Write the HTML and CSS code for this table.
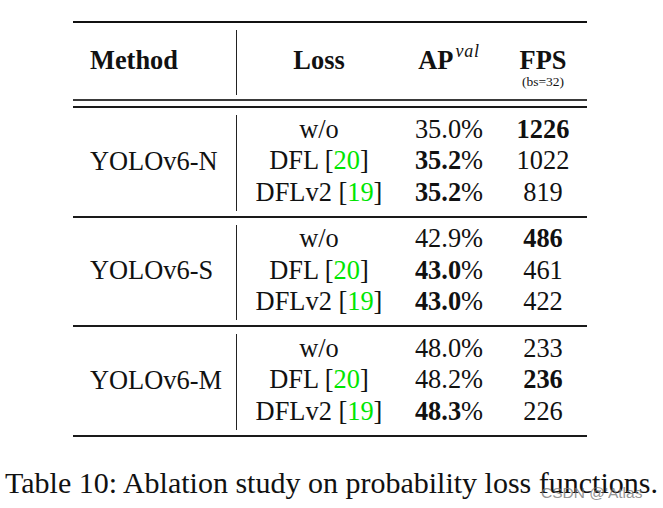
FILE: index.html
```html
<!DOCTYPE html>
<html>
<head>
<meta charset="utf-8">
<link rel="stylesheet" href="styles.css">
</head>
<body>
<div class="page">
  <div class="tbl">
    <div class="rule thick"></div>
    <div class="head">
      <div class="c1"><b>Method</b></div>
      <div class="cols">
        <div class="c2"><b>Loss</b></div>
        <div class="c3"><b>AP</b><span class="sup">val</span></div>
        <div class="c4"><b>FPS</b><span class="bs">(bs=32)</span></div>
      </div>
    </div>
    <div class="rule thin"></div>
    <div class="gap"></div>
    <div class="rule thin dark"></div>

    <div class="group">
      <div class="c1">YOLOv6-N</div>
      <div class="cols rows">
        <div class="c2">w/o</div><div class="c3">35.0%</div><div class="c4"><b>1226</b></div>
        <div class="c2">DFL [<span class="cite">20</span>]</div><div class="c3"><b>35.2</b>%</div><div class="c4">1022</div>
        <div class="c2">DFLv2 [<span class="cite">19</span>]</div><div class="c3"><b>35.2</b>%</div><div class="c4">819</div>
      </div>
    </div>
    <div class="rule mid"></div>

    <div class="group">
      <div class="c1">YOLOv6-S</div>
      <div class="cols rows">
        <div class="c2">w/o</div><div class="c3">42.9%</div><div class="c4"><b>486</b></div>
        <div class="c2">DFL [<span class="cite">20</span>]</div><div class="c3"><b>43.0</b>%</div><div class="c4">461</div>
        <div class="c2">DFLv2 [<span class="cite">19</span>]</div><div class="c3"><b>43.0</b>%</div><div class="c4">422</div>
      </div>
    </div>
    <div class="rule mid"></div>

    <div class="group">
      <div class="c1">YOLOv6-M</div>
      <div class="cols rows">
        <div class="c2">w/o</div><div class="c3">48.0%</div><div class="c4">233</div>
        <div class="c2">DFL [<span class="cite">20</span>]</div><div class="c3">48.2%</div><div class="c4"><b>236</b></div>
        <div class="c2">DFLv2 [<span class="cite">19</span>]</div><div class="c3"><b>48.3</b>%</div><div class="c4">226</div>
      </div>
    </div>
    <div class="rule mid"></div>
  </div>
  <p class="caption">Table 10: Ablation study on probability loss functions.</p>
  <span class="wm">CSDN @'Atlas</span>
</div>
</body>
</html>
```

FILE: styles.css
```css
html, body {
  margin: 0;
  padding: 0;
  background: #ffffff;
}
.page {
  position: relative;
  width: 663px;
  height: 508px;
  overflow: hidden;
  font-family: "Liberation Serif", "Times New Roman", serif;
  color: #111;
}
.tbl {
  width: 514px;
  margin-left: 73px;
  padding-top: 21px;
  font-size: 26.4px;
  line-height: 31.7px;
}
.rule {
  height: 2px;
  background: #111;
}
.rule.thin {
  height: 2px;
  background: #3a3a3a;
}
.rule.thin.dark {
  background: #1a1a1a;
}
.rule.mid {
  background: #1a1a1a;
}
.gap {
  height: 5px;
}
.head {
  display: flex;
  height: 76px;
}
.head .c1 {
  margin: 7px 0 4px;
  padding-top: 15.2px;
}
.head .cols {
  padding-top: 22.2px;
}
.c1 {
  width: 164px;
  padding-left: 17px;
  box-sizing: border-box;
  border-right: 1px solid #222;
  white-space: nowrap;
}
.cols {
  display: grid;
  grid-template-columns: 164px 96px 89px;
  align-content: start;
}
.c2, .c3, .c4 {
  text-align: center;
  white-space: nowrap;
}
.c4 {
  padding-left: 3px;
}
.sup {
  font-style: italic;
  font-size: 18px;
  position: relative;
  top: -12px;
  margin-left: 2px;
  letter-spacing: 0.8px;
}
.bs {
  display: block;
  font-size: 13.5px;
  line-height: 15px;
  margin-top: -3px;
}
.group {
  display: flex;
  height: 107.5px;
}
.group .c1 {
  margin: 7px 0 5px;
  padding-top: 30.5px;
}
.group .rows {
  padding-top: 5.5px;
}
.cite {
  color: #00e600;
}
.caption {
  margin: 29px 0 0;
  text-align: center;
  font-size: 30px;
  line-height: 34px;
  color: #111;
}
.wm {
  position: absolute;
  left: 541px;
  top: 484px;
  font-family: "Liberation Sans", Arial, sans-serif;
  font-size: 15.5px;
  color: rgba(120, 120, 120, 0.8);
  white-space: nowrap;
}
```
